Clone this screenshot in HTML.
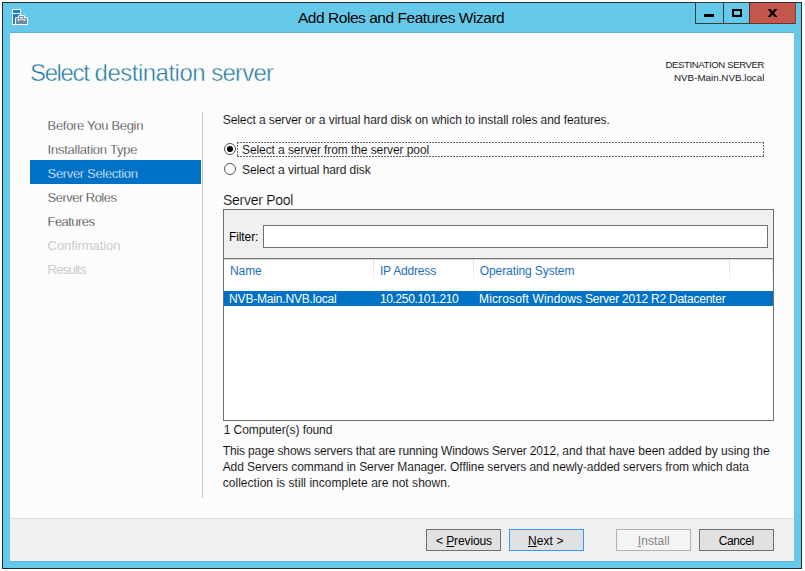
<!DOCTYPE html>
<html>
<head>
<meta charset="utf-8">
<title>Add Roles and Features Wizard</title>
<style>
*{box-sizing:border-box;margin:0;padding:0}
html,body{width:805px;height:571px;overflow:hidden;background:#fff}
body{position:relative;font-family:"Liberation Sans",sans-serif}
.a{position:absolute}
.t{position:absolute;white-space:nowrap;line-height:1;font-family:"Liberation Sans",sans-serif}
.t u{text-decoration:underline;text-underline-offset:1px}
#win{left:2px;top:2px;width:800px;height:567px;background:#65caea;border:1px solid #2b2b2b}
#content{left:10px;top:33px;width:784px;height:528px;background:#fcfcfc}
#topline{left:10px;top:32px;width:784px;height:1px;background:#62b1d2}
#botline{left:10px;top:561px;width:784px;height:1px;background:#62b1d2}
#footline{left:10px;top:518px;width:784px;height:1px;background:#dfdfdf}
#footer{left:10px;top:519px;width:784px;height:42px;background:#f0f0f0}
#navsel{left:30px;top:160px;width:171px;height:24px;background:#0072c6}
#vsep{left:202px;top:112px;width:1px;height:386px;background:#c9c9c9}
.radio{width:12px;height:12px;border-radius:50%;border:1px solid #555;background:#fff}
.dot{width:6px;height:6px;border-radius:50%;background:#000}
.fh{left:237px;width:527px;height:1px;background:repeating-linear-gradient(90deg,#666 0 2px,transparent 2px 3px)}
.fv{top:142px;width:1px;height:15px;background:repeating-linear-gradient(180deg,#666 0 2px,transparent 2px 3px)}
#pool{left:223px;top:209px;width:551px;height:212px;border:1px solid #6f6f6f;background:#fff}
#fband{left:224px;top:210px;width:549px;height:48px;background:#f0f0f0}
#fline{left:224px;top:258px;width:549px;height:1px;background:#6f6f6f}
#finput{left:263px;top:225px;width:505px;height:23px;border:1px solid #6f6f6f;background:#fff}
.csep{top:259px;width:1px;height:22px;background:linear-gradient(#dcdcdc,#ececec 70%,#fff)}
#row{left:224px;top:291px;width:549px;height:15px;background:#0072c6}
.btn{top:529px;width:75px;height:22px;border:1px solid #707070;background:#e1e1e1}
.cb{top:2px;height:22px;border:1px solid #3b3b3b}
</style>
</head>
<body>
<div class="a" id="win"></div>
<div class="a" id="content"></div>
<div class="a" id="topline"></div>
<div class="a" id="botline"></div>
<div class="a" id="footline"></div>
<div class="a" id="footer"></div>

<!-- caption icon -->
<svg class="a" style="left:11px;top:8px" width="18" height="18" viewBox="0 0 18 18">
 <rect x="1" y="1" width="9" height="16" rx="1" fill="#fff"/>
 <rect x="2" y="2" width="7" height="3" fill="#1b7fd6"/>
 <rect x="2" y="6" width="7" height="10" fill="#1b7fd6"/>
 <rect x="4" y="9.2" width="13" height="7.8" rx="1" fill="#fff"/>
 <path d="M8.5 10 V8.5 H12.5 V10" stroke="#fff" stroke-width="2.8" stroke-linejoin="round" fill="none"/>
 <rect x="5" y="10.2" width="11" height="5.8" fill="#6d8ca5"/>
 <path d="M8.5 10.4 V8.5 H12.5 V10.4" stroke="#6d8ca5" stroke-width="1" fill="none"/>
 <rect x="9" y="9" width="3" height="1.1" fill="#fff"/>
 <rect x="6.2" y="11.3" width="8.3" height="0.8" fill="#f2f6f9"/>
 <rect x="7" y="12" width="1.2" height="1" fill="#f2f6f9"/>
 <rect x="12.8" y="12" width="1.2" height="1" fill="#f2f6f9"/>
</svg>

<!-- caption buttons -->
<div class="a cb" style="left:695px;width:29px"></div>
<div class="a cb" style="left:723px;width:27px"></div>
<div class="a" style="left:749px;top:3px;width:47px;height:21px;background:#c4574c;border-left:1px solid #5a3030;border-bottom:1px solid #6b322c;border-right:1px solid #83413a"></div>
<div class="a" style="left:704px;top:14px;width:10px;height:3px;background:#000"></div>
<div class="a" style="left:732px;top:9px;width:10px;height:8px;border:2px solid #000"></div>
<svg class="a" style="left:767px;top:9px" width="11" height="8" viewBox="0 0 11 8">
 <path d="M0.6 0 H3.6 L5.5 2.5 L7.4 0 H10.4 L7.1 4 L10.4 8 H7.4 L5.5 5.5 L3.6 8 H0.6 L3.9 4 Z" fill="#000"/>
</svg>

<div class="a" id="navsel"></div>
<div class="a" id="vsep"></div>

<!-- radios -->
<div class="a radio" style="left:224px;top:143px"></div>
<div class="a dot" style="left:227px;top:146px"></div>
<div class="a radio" style="left:224px;top:163px"></div>
<div class="a fh" style="top:142px"></div><div class="a fh" style="top:156px"></div><div class="a fv" style="left:237px"></div><div class="a fv" style="left:763px"></div>

<!-- server pool -->
<div class="a" id="pool"></div>
<div class="a" id="fband"></div>
<div class="a" style="left:224px;top:257px;width:549px;height:1px;background:#f7f7f7"></div>
<div class="a" id="fline"></div>
<div class="a" style="left:224px;top:259px;width:549px;height:1px;background:#dcdcdc"></div>
<div class="a" id="finput"></div>
<div class="a csep" style="left:373px"></div>
<div class="a csep" style="left:473px"></div>
<div class="a csep" style="left:729px"></div>
<div class="a csep" style="left:772px"></div>
<div class="a" id="row"></div>

<!-- buttons -->
<div class="a btn" style="left:426px"></div>
<div class="a btn" style="left:509px;border-color:#3399ff"></div>
<div class="a btn" style="left:616px;border-color:#adb2b5;background:#f4f4f4"></div>
<div class="a btn" style="left:699px"></div>

<span class="t" id="title" style="left:298.00px;top:9.88px;font-size:15.5px;letter-spacing:-0.464px;color:#000;">Add Roles and Features Wizard</span>
<span class="t" id="h1a" style="left:30.00px;top:60.68px;font-size:24px;letter-spacing:-1.381px;color:#1c759e;-webkit-text-stroke:0.48px #fcfcfc;">Select</span>
<span class="t" id="h1b" style="left:94.60px;top:60.68px;font-size:24px;letter-spacing:-0.509px;color:#1c759e;-webkit-text-stroke:0.48px #fcfcfc;">destination</span>
<span class="t" id="h1c" style="left:211.30px;top:60.68px;font-size:24px;letter-spacing:-0.797px;color:#1c759e;-webkit-text-stroke:0.48px #fcfcfc;">server</span>
<span class="t" id="ds1" style="left:665.60px;top:59.87px;font-size:9.6px;letter-spacing:-0.408px;color:#222;">DESTINATION SERVER</span>
<span class="t" id="ds2" style="left:674.00px;top:72.70px;font-size:9.8px;letter-spacing:0.001px;color:#222;">NVB-Main.NVB.local</span>
<span class="t" id="n1" style="left:47.60px;top:119.00px;font-size:13px;letter-spacing:-0.312px;color:#262626;-webkit-text-stroke:0.3px #fcfcfc;">Before You Begin</span>
<span class="t" id="n2" style="left:47.60px;top:143.00px;font-size:13px;letter-spacing:-0.245px;color:#262626;-webkit-text-stroke:0.3px #fcfcfc;">Installation Type</span>
<span class="t" id="n3" style="left:47.60px;top:167.00px;font-size:13px;letter-spacing:-0.339px;color:#fff;-webkit-text-stroke:0.3px #0072c6;">Server Selection</span>
<span class="t" id="n4" style="left:47.60px;top:191.00px;font-size:13px;letter-spacing:-0.531px;color:#262626;-webkit-text-stroke:0.3px #fcfcfc;">Server Roles</span>
<span class="t" id="n5" style="left:47.60px;top:215.00px;font-size:13px;letter-spacing:-0.573px;color:#111111;-webkit-text-stroke:0.3px #fcfcfc;">Features</span>
<span class="t" id="n6" style="left:47.60px;top:239.00px;font-size:13px;letter-spacing:-0.082px;color:#cbcbcb;">Confirmation</span>
<span class="t" id="n7" style="left:47.60px;top:263.00px;font-size:13px;letter-spacing:-0.760px;color:#cbcbcb;">Results</span>
<span class="t" id="p0" style="left:222.70px;top:113.84px;font-size:12px;letter-spacing:-0.065px;color:#000;-webkit-text-stroke:0.1px #fcfcfc;">Select a server or a virtual hard disk on which to install roles and features.</span>
<span class="t" id="r1" style="left:242.00px;top:143.84px;font-size:12px;letter-spacing:-0.082px;color:#000;-webkit-text-stroke:0.1px #fcfcfc;">Select a server from the server pool</span>
<span class="t" id="r2" style="left:242.00px;top:163.84px;font-size:12px;letter-spacing:-0.081px;color:#000;-webkit-text-stroke:0.1px #fcfcfc;">Select a virtual hard disk</span>
<span class="t" id="sp" style="left:223.00px;top:193.15px;font-size:14px;letter-spacing:-0.276px;color:#0c0c0c;-webkit-text-stroke:0.15px #fcfcfc;">Server Pool</span>
<span class="t" id="fl" style="left:228.90px;top:230.84px;font-size:12px;letter-spacing:-0.083px;color:#000;">Filter:</span>
<span class="t" id="c1" style="left:230.10px;top:264.84px;font-size:12px;letter-spacing:-0.139px;color:#1e6fbe;">Name</span>
<span class="t" id="c2" style="left:379.90px;top:264.84px;font-size:12px;letter-spacing:-0.170px;color:#1e6fbe;">IP Address</span>
<span class="t" id="c3" style="left:479.80px;top:264.84px;font-size:12px;letter-spacing:-0.096px;color:#1e6fbe;">Operating System</span>
<span class="t" id="d1" style="left:229.10px;top:292.84px;font-size:12px;letter-spacing:-0.183px;color:#fff;">NVB-Main.NVB.local</span>
<span class="t" id="d2" style="left:379.90px;top:292.84px;font-size:12px;letter-spacing:-0.348px;color:#fff;">10.250.101.210</span>
<span class="t" id="d3a" style="left:479.00px;top:292.84px;font-size:12px;letter-spacing:0.151px;color:#fff;">Microsoft Windows</span>
<span class="t" id="d3b" style="left:584.90px;top:292.84px;font-size:12px;letter-spacing:-0.221px;color:#fff;">Server 2012 R2 Datacenter</span>
<span class="t" id="cf" style="left:223.70px;top:423.84px;font-size:12px;letter-spacing:-0.076px;color:#000;-webkit-text-stroke:0.1px #fcfcfc;">1 Computer(s) found</span>
<span class="t" id="q1a" style="left:222.70px;top:444.84px;font-size:12px;letter-spacing:-0.126px;color:#000;-webkit-text-stroke:0.1px #fcfcfc;">This page shows servers that are running Windows Server 2012,</span>
<span class="t" id="q1b" style="left:562.30px;top:444.84px;font-size:12px;letter-spacing:-0.003px;color:#000;-webkit-text-stroke:0.1px #fcfcfc;">and that have been added by using the</span>
<span class="t" id="q2" style="left:222.70px;top:460.84px;font-size:12px;letter-spacing:-0.069px;color:#000;-webkit-text-stroke:0.1px #fcfcfc;">Add Servers command in Server Manager. Offline servers and newly-added servers from which data</span>
<span class="t" id="q3" style="left:222.70px;top:476.84px;font-size:12px;letter-spacing:0.034px;color:#000;-webkit-text-stroke:0.1px #fcfcfc;">collection is still incomplete are not shown.</span>
<span class="t" id="b1" style="left:436.10px;top:534.84px;font-size:12px;letter-spacing:-0.116px;color:#000;">&lt; <u>P</u>revious</span>
<span class="t" id="b2" style="left:528.00px;top:534.84px;font-size:12px;letter-spacing:0.074px;color:#000;"><u>N</u>ext &gt;</span>
<span class="t" id="b3" style="left:637.70px;top:534.84px;font-size:12px;letter-spacing:0.090px;color:#878787;"><u>I</u>nstall</span>
<span class="t" id="b4" style="left:718.80px;top:534.84px;font-size:12px;letter-spacing:-0.412px;color:#000;">Cancel</span>
</body>
</html>
